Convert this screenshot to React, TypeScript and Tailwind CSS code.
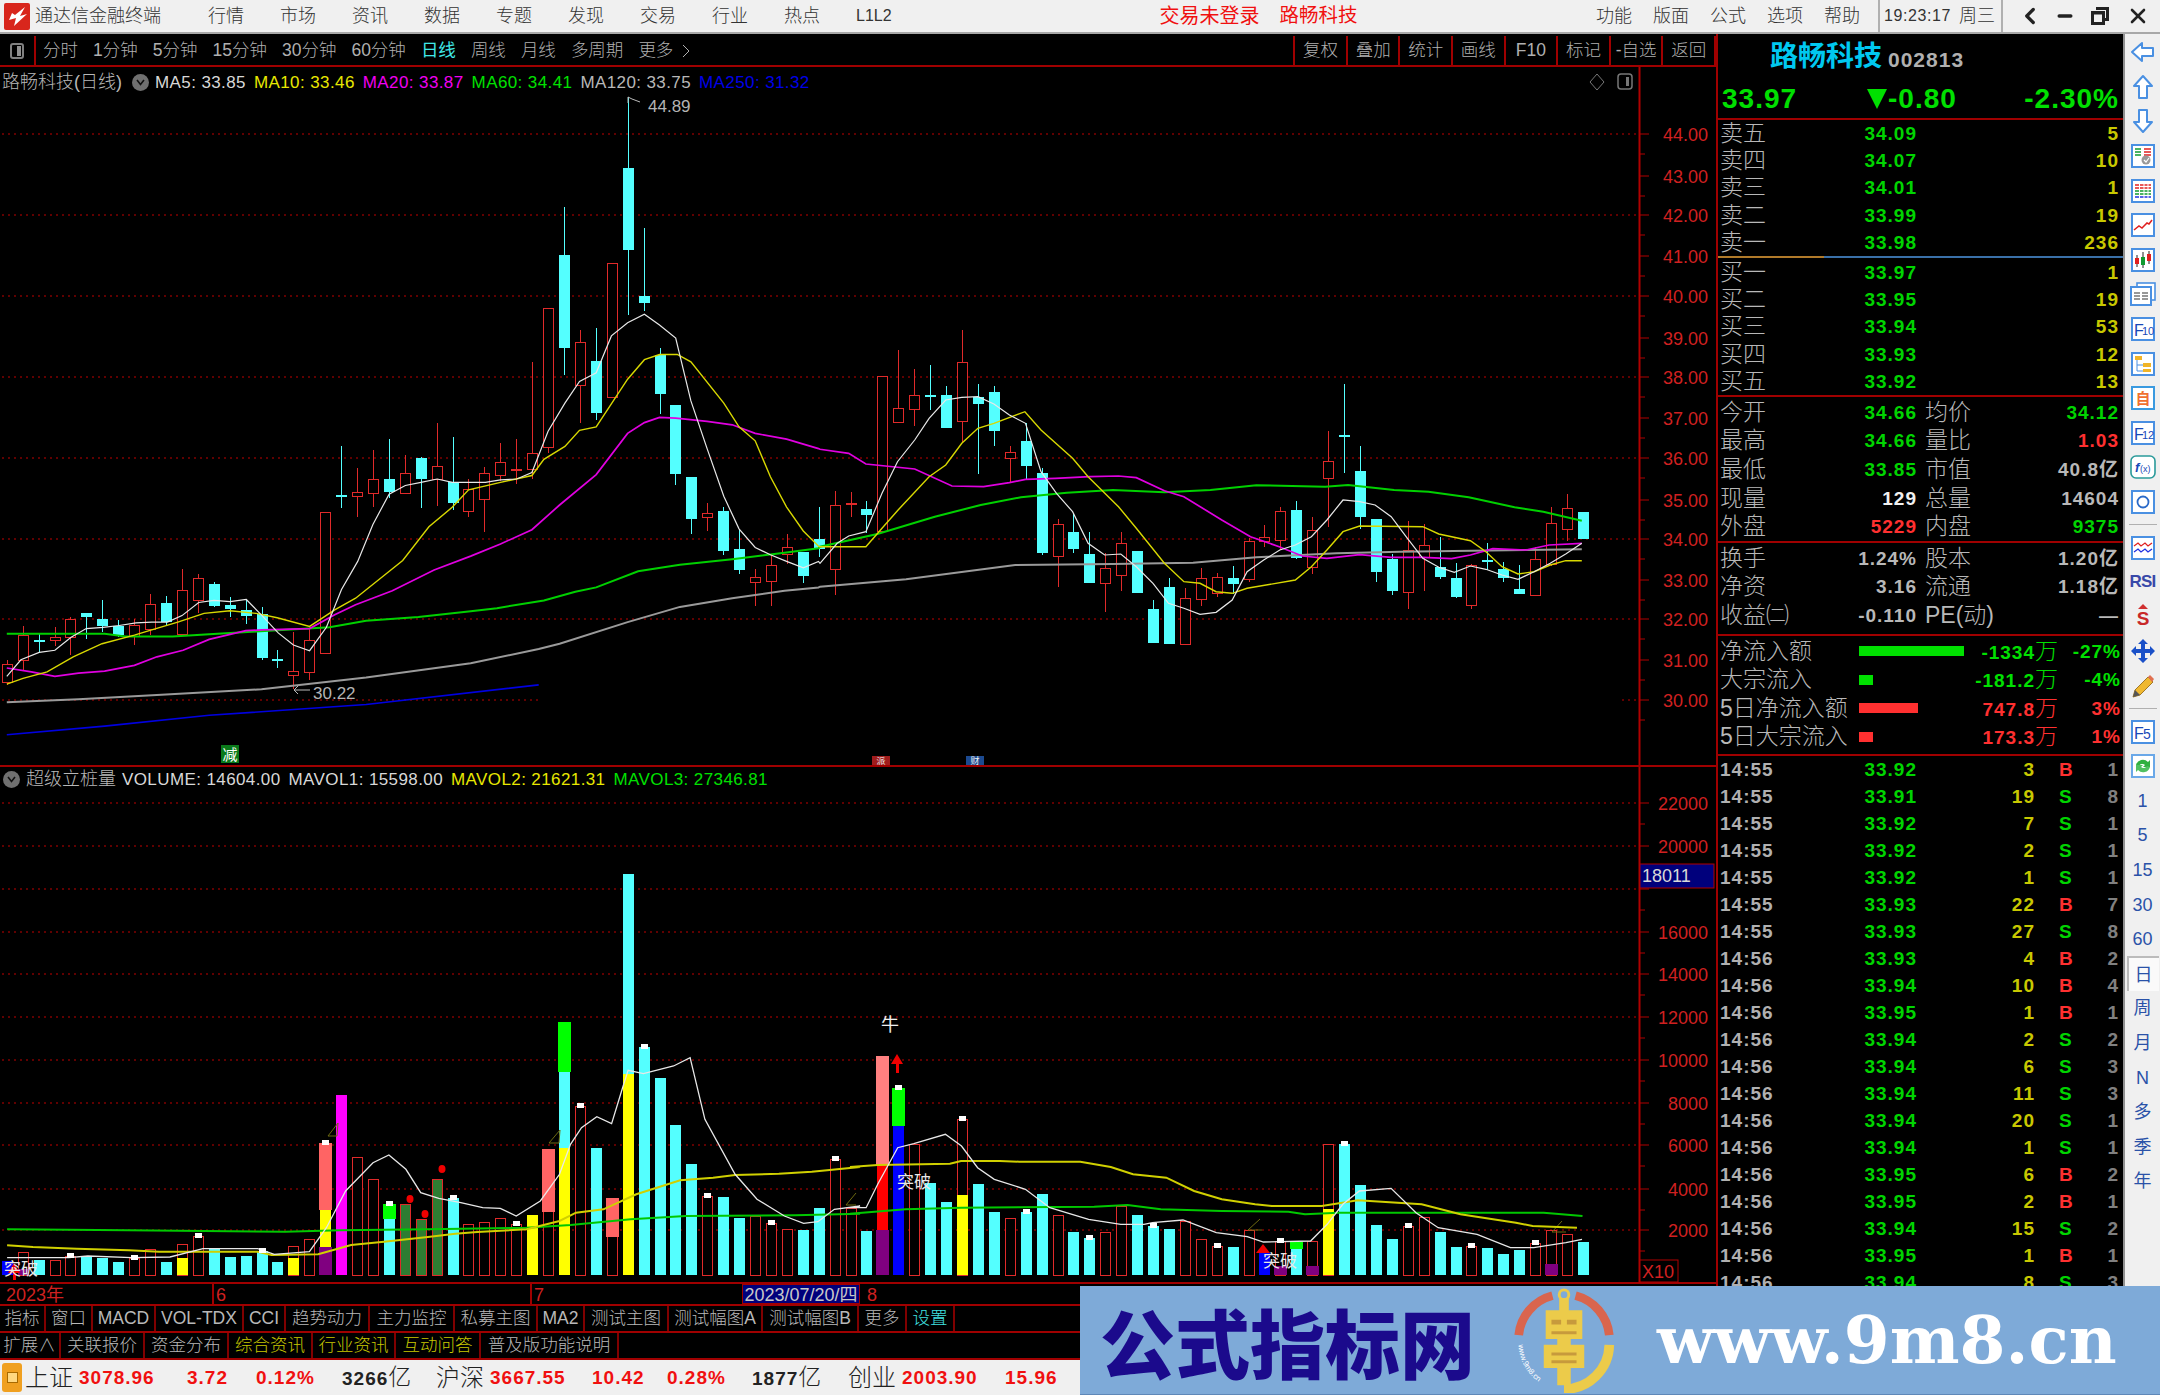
import React from 'react';
import { ChevronLeft, Minus, X } from 'lucide-react';

// chart readings were taken from zoomed crops, so each group keeps its own crop scale
type Pt = [number, number];
const fromA = (p: Pt): Pt => [p[0] / 1.912, 80 + p[1] / 2.306];
const fromB = (p: Pt): Pt => [820 + p[0] / 1.742, 280 + p[1] / 3];
const fromC = (p: Pt): Pt => [p[0] / 1.823, 860 + p[1] / 3];
const fromD = (p: Pt): Pt => [850 + p[0] / 1.802, 860 + p[1] / 3];
const barX = (i: number) => Math.round(6.8 + 15.92 * i);
const pts = (list: Pt[]) => list.map((p) => `${p[0].toFixed(1)},${p[1].toFixed(1)}`).join(' ');

type Candle = [number, number, number, number, 'r' | 'c'];
const candlesA: Candle[] = [
  [1338, 1347, 1389, 1395, 'r'], [1260, 1280, 1337, 1360, 'r'], [1275, 1291, 1293, 1320, 'c'], [1262, 1284, 1292, 1305, 'r'],
  [1238, 1243, 1285, 1325, 'r'], [1228, 1228, 1238, 1288, 'c'], [1200, 1243, 1259, 1272, 'c'], [1245, 1260, 1280, 1285, 'c'],
  [1243, 1256, 1282, 1303, 'r'], [1186, 1208, 1265, 1280, 'r'], [1190, 1207, 1250, 1260, 'c'], [1128, 1177, 1278, 1280, 'r'],
  [1140, 1148, 1199, 1228, 'r'], [1158, 1162, 1213, 1216, 'c'], [1193, 1211, 1221, 1238, 'c'], [1198, 1222, 1235, 1255, 'c'],
  [1215, 1232, 1334, 1338, 'c'], [1315, 1335, 1337, 1355, 'c'], [1272, 1363, 1372, 1405, 'r'], [1265, 1291, 1364, 1383, 'r'],
  [996, 996, 1320, 1323, 'r'], [843, 958, 963, 988, 'c'], [895, 951, 960, 1008, 'r'], [853, 921, 953, 985, 'r'],
  [829, 920, 950, 965, 'c'], [865, 907, 953, 955, 'r'], [870, 871, 919, 988, 'c'], [792, 889, 919, 982, 'r'],
  [823, 928, 977, 992, 'c'], [920, 944, 995, 1008, 'r'], [892, 907, 966, 1043, 'r'], [837, 882, 912, 925, 'r'],
  [829, 896, 898, 932, 'r'], [650, 861, 899, 920, 'r'], [525, 525, 846, 860, 'r'], [293, 404, 618, 680, 'c'],
  [577, 605, 704, 790, 'r'], [573, 647, 767, 785, 'c'], [422, 422, 732, 733, 'r'], [40, 203, 393, 543, 'c'],
  [342, 497, 514, 532, 'c'], [618, 633, 722, 770, 'c'], [750, 750, 909, 933, 'c'], [916, 916, 1012, 1048, 'c'],
  [975, 999, 1008, 1040, 'r'], [985, 995, 1088, 1095, 'c'], [1035, 1082, 1130, 1140, 'c'], [1128, 1146, 1157, 1213, 'r'],
  [1092, 1118, 1154, 1213, 'r'], [1048, 1077, 1092, 1115, 'r'], [1088, 1088, 1143, 1160, 'c'], [985, 1058, 1080, 1100, 'c'],
];
const candlesB: Candle[] = [
  [632, 674, 865, 945, 'r'], [636, 669, 677, 712, 'r'], [663, 686, 704, 760, 'c'], [287, 287, 752, 760, 'r'],
  [209, 385, 428, 430, 'r'], [267, 345, 387, 437, 'r'], [255, 345, 347, 390, 'c'], [317, 344, 442, 443, 'c'],
  [150, 246, 423, 485, 'r'], [313, 350, 370, 582, 'c'], [317, 335, 451, 497, 'c'], [497, 517, 536, 605, 'r'],
  [430, 484, 559, 598, 'c'], [565, 578, 817, 825, 'c'], [718, 733, 829, 920, 'r'], [700, 755, 806, 820, 'c'],
  [755, 822, 910, 910, 'c'], [820, 863, 909, 995, 'r'], [755, 790, 887, 932, 'r'], [812, 812, 937, 940, 'c'],
  [960, 988, 1090, 1090, 'c'], [893, 920, 1090, 1090, 'c'], [925, 953, 1090, 1090, 'r'], [865, 895, 958, 978, 'r'],
  [878, 890, 938, 950, 'r'], [858, 893, 910, 942, 'c'], [775, 782, 895, 905, 'r'], [735, 772, 785, 802, 'r'],
  [682, 692, 778, 810, 'r'], [663, 691, 835, 838, 'c'], [712, 750, 860, 882, 'r'], [452, 543, 595, 740, 'r'],
  [312, 466, 469, 578, 'c'], [497, 574, 713, 748, 'c'], [718, 718, 878, 905, 'c'], [822, 838, 933, 946, 'c'],
  [722, 810, 937, 987, 'r'], [732, 795, 830, 932, 'r'], [770, 862, 892, 897, 'c'], [850, 893, 951, 955, 'c'],
  [853, 855, 976, 987, 'r'], [790, 840, 843, 870, 'c'], [845, 866, 892, 906, 'c'], [855, 926, 942, 943, 'c'],
  [800, 836, 945, 947, 'r'], [682, 728, 850, 858, 'r'], [642, 683, 747, 783, 'r'], [695, 695, 775, 778, 'c'],
];

const maLines: { color: string; width: number; a: Pt[]; b: Pt[] }[] = [
  {
    color: '#9a9a9a', width: 2,
    a: [[13, 1435], [150, 1428], [300, 1418], [500, 1405], [700, 1378], [900, 1345], [1030, 1312], [1070, 1300], [1200, 1250], [1300, 1215], [1400, 1195], [1500, 1178], [1565, 1170]],
    b: [[0, 920], [150, 898], [340, 855], [510, 852], [650, 848], [760, 832], [900, 820], [1010, 815], [1327, 808]],
  },
  {
    color: '#00d000', width: 2,
    a: [[13, 1277], [200, 1277], [240, 1283], [330, 1283], [400, 1278], [490, 1272], [630, 1262], [700, 1247], [800, 1238], [900, 1225], [950, 1218], [1040, 1200], [1100, 1180], [1140, 1170], [1220, 1133], [1300, 1118], [1400, 1105], [1500, 1090], [1565, 1080]],
    b: [[0, 800], [100, 762], [200, 710], [280, 675], [350, 652], [430, 638], [510, 630], [600, 637], [680, 630], [760, 616], [880, 620], [920, 615], [1000, 630], [1060, 635], [1130, 652], [1210, 682], [1260, 695], [1327, 722]],
  },
  {
    color: '#e000e0', width: 1.7,
    a: [[13, 1356], [60, 1365], [105, 1375], [150, 1368], [200, 1363], [257, 1350], [300, 1330], [350, 1315], [400, 1290], [470, 1270], [501, 1268], [592, 1265], [640, 1233], [680, 1210], [750, 1178], [830, 1130], [900, 1098], [957, 1070], [1017, 1037], [1070, 980], [1140, 910], [1200, 815], [1232, 790], [1261, 778], [1292, 780], [1352, 787], [1400, 795], [1444, 815], [1504, 828], [1565, 850]],
    b: [[0, 508], [50, 520], [80, 552], [165, 567], [230, 618], [285, 620], [330, 608], [358, 598], [410, 595], [470, 590], [520, 588], [551, 593], [600, 632], [634, 650], [700, 720], [750, 770], [800, 800], [840, 828], [883, 835], [940, 824], [995, 832], [1050, 832], [1100, 836], [1133, 825], [1172, 806], [1230, 810], [1270, 795], [1327, 790]],
  },
  {
    color: '#d8d800', width: 1.4,
    a: [[13, 1393], [44, 1380], [90, 1365], [140, 1330], [195, 1300], [257, 1280], [290, 1268], [340, 1250], [390, 1230], [440, 1224], [490, 1230], [530, 1240], [592, 1260], [640, 1222], [680, 1195], [770, 1108], [820, 1030], [865, 985], [896, 945], [957, 928], [1017, 912], [1040, 875], [1080, 845], [1108, 808], [1140, 800], [1200, 690], [1232, 645], [1261, 633], [1295, 633], [1321, 650], [1384, 745], [1413, 800], [1444, 832], [1473, 915], [1504, 985], [1536, 1040], [1565, 1075]],
    b: [[0, 800], [80, 800], [108, 745], [136, 690], [190, 590], [219, 555], [247, 490], [275, 445], [303, 430], [357, 395], [385, 450], [440, 535], [467, 590], [520, 680], [551, 745], [600, 850], [634, 905], [662, 910], [690, 935], [718, 940], [744, 925], [828, 900], [856, 860], [883, 810], [911, 755], [940, 738], [1050, 740], [1078, 762], [1133, 782], [1160, 815], [1188, 860], [1216, 882], [1244, 875], [1272, 855], [1299, 842], [1327, 842]],
  },
  {
    color: '#e8e8e8', width: 1.2,
    a: [[13, 1375], [40, 1337], [75, 1320], [105, 1315], [136, 1285], [165, 1265], [197, 1262], [228, 1258], [260, 1252], [290, 1250], [320, 1250], [348, 1235], [380, 1205], [409, 1200], [440, 1203], [471, 1198], [501, 1235], [532, 1275], [561, 1303], [592, 1316], [624, 1262], [653, 1175], [684, 1110], [713, 1025], [744, 955], [775, 935], [805, 928], [836, 920], [865, 928], [896, 928], [928, 928], [957, 922], [988, 920], [1017, 905], [1048, 810], [1080, 745], [1108, 695], [1140, 675], [1169, 590], [1200, 560], [1232, 540], [1261, 565], [1292, 595], [1321, 740], [1352, 850], [1384, 960], [1413, 1035], [1444, 1078], [1473, 1095], [1504, 1110], [1536, 1125], [1565, 1110]],
    b: [[0, 850], [30, 790], [50, 768], [80, 755], [108, 640], [135, 545], [165, 480], [190, 415], [219, 360], [247, 352], [275, 350], [303, 372], [330, 405], [358, 430], [385, 575], [412, 640], [440, 695], [467, 790], [496, 825], [524, 822], [551, 860], [580, 910], [607, 970], [634, 985], [662, 1003], [690, 997], [718, 960], [744, 875], [773, 840], [801, 810], [828, 795], [856, 770], [883, 720], [911, 660], [940, 665], [967, 675], [995, 710], [1021, 770], [1050, 835], [1078, 862], [1105, 877], [1133, 858], [1160, 868], [1188, 885], [1216, 898], [1244, 875], [1272, 850], [1299, 822], [1327, 790]],
  },
];
const ma250: Pt[] = [[13, 1510], [200, 1490], [400, 1465], [700, 1440], [1030, 1395]];

// volume bars, kind + top in crop rows; the rows are 3x and start at y=860
type BarKind = 'c' | 'r' | 'y' | 'm' | 'b' | 'g' | 'R';
const bars: [BarKind, number][] = [
  ['b', 1200], ['r', 1172], ['c', 1198], ['r', 1198], ['r', 1185], ['c', 1187], ['c', 1190], ['c', 1202], ['r', 1192], ['r', 1163],
  ['c', 1202], ['r', 1150], ['r', 1125], ['c', 1160], ['c', 1188], ['c', 1184], ['c', 1170], ['c', 1202], ['r', 1155], ['r', 1135],
  ['y', 1047], ['m', 702], ['r', 887], ['r', 955], ['c', 1075], ['g', 1030], ['g', 1075], ['g', 954], ['c', 1010], ['r', 1090],
  ['r', 1082], ['r', 1072], ['r', 1090], ['y', 1062], ['r', 887], ['y', 860], ['r', 735], ['c', 860], ['r', 1012], ['y', 640],
  ['c', 558], ['c', 652], ['c', 792], ['c', 908], ['r', 1005], ['c', 1008], ['c', 1070], ['r', 1065], ['r', 1087], ['r', 1103],
  ['c', 1107], ['c', 1040], ['r', 895], ['r', 1040], ['c', 1110], ['R', 912], ['b', 795], ['r', 848], ['c', 965], ['c', 1022],
  ['r', 775], ['c', 968], ['c', 1053], ['r', 1072], ['c', 1052], ['c', 1000], ['r', 1063], ['c', 1112], ['c', 1130], ['r', 1112],
  ['r', 1035], ['c', 1062], ['c', 1095], ['c', 1103], ['r', 1080], ['r', 1135], ['r', 1155], ['c', 1157], ['r', 1108], ['b', 1175],
  ['r', 1140], ['c', 1165], ['r', 1140], ['r', 850], ['c', 850], ['c', 972], ['c', 1093], ['c', 1135], ['r', 1095], ['r', 1068],
  ['c', 1112], ['c', 1157], ['r', 1155], ['c', 1162], ['c', 1180], ['c', 1168], ['r', 1145], ['r', 1108], ['r', 1118], ['c', 1143],
];
// i, colour, top, bottom, wide
const segs: [number, string, number, number, boolean][] = [
  [1, '#800080', 1225, 1242, false], [11, '#ffff00', 1192, 1242, false], [18, '#ffff00', 1192, 1242, false],
  [20, '#ff6464', 845, 1047, true], [20, '#800080', 1157, 1242, true], [24, '#00ff00', 1030, 1075, true],
  [34, '#ff6464', 864, 1052, true], [35, '#54ffff', 634, 860, false], [35, '#00ff00', 482, 634, true],
  [38, '#ff6464', 1012, 1128, true], [39, '#54ffff', 40, 640, false], [55, '#ff8080', 585, 912, true],
  [55, '#800080', 1107, 1242, true], [56, '#00ff00', 680, 795, true], [60, '#ffff00', 1003, 1242, false],
  [80, '#800080', 1215, 1242, true], [81, '#00ff00', 1143, 1165, true], [82, '#800080', 1215, 1242, true],
  [83, '#ffff00', 1043, 1242, false], [97, '#800080', 1210, 1242, true],
];
const volLines: { color: string; width: number; a: Pt[]; b: Pt[] }[] = [
  {
    color: '#00c800', width: 2,
    a: [[13, 1105], [232, 1108], [520, 1112], [620, 1108], [780, 1105], [960, 1100], [1040, 1092], [1150, 1075], [1250, 1065], [1450, 1063], [1568, 1058]],
    b: [[0, 1058], [100, 1045], [200, 1040], [440, 1037], [500, 1032], [560, 1045], [670, 1050], [790, 1052], [820, 1060], [880, 1055], [1250, 1055], [1320, 1065]],
  },
  {
    color: '#d0d000', width: 2,
    a: [[13, 1153], [60, 1158], [140, 1163], [235, 1168], [290, 1172], [470, 1172], [495, 1182], [580, 1180], [640, 1152], [700, 1142], [780, 1128], [830, 1118], [870, 1113], [960, 1105], [1020, 1080], [1050, 1055], [1100, 1045], [1160, 1000], [1240, 958], [1300, 950], [1340, 942], [1420, 938], [1480, 932], [1568, 918]],
    b: [[0, 918], [50, 912], [180, 908], [200, 900], [270, 900], [305, 902], [415, 902], [470, 918], [510, 940], [570, 950], [620, 990], [670, 1015], [730, 1030], [760, 1035], [850, 1035], [915, 1018], [1030, 1030], [1100, 1060], [1200, 1085], [1230, 1095], [1310, 1100]],
  },
  {
    color: '#e8e8e8', width: 1.3,
    a: [[13, 1190], [90, 1190], [125, 1190], [160, 1185], [240, 1190], [310, 1188], [370, 1163], [470, 1163], [500, 1180], [564, 1172], [595, 1100], [630, 990], [680, 905], [709, 882], [740, 925], [767, 995], [800, 1012], [840, 1025], [880, 1040], [912, 1042], [941, 1065], [985, 1020], [1020, 940], [1040, 850], [1060, 800], [1088, 767], [1115, 788], [1135, 680], [1145, 628], [1173, 638], [1228, 615], [1258, 590], [1285, 775], [1340, 940], [1380, 1015], [1430, 1065], [1465, 1087], [1491, 1082], [1521, 1045], [1568, 1035]],
    b: [[0, 1040], [29, 1040], [50, 970], [86, 860], [115, 848], [172, 820], [201, 855], [230, 920], [260, 955], [316, 985], [360, 1040], [430, 1075], [488, 1090], [530, 1090], [545, 1085], [600, 1077], [660, 1115], [716, 1127], [745, 1143], [830, 1140], [860, 1090], [888, 1030], [918, 990], [975, 982], [1020, 1055], [1060, 1100], [1130, 1120], [1190, 1160], [1232, 1160], [1290, 1145], [1319, 1135]],
  },
];

const priceTicks: [string, number][] = [['44.00', 134], ['43.00', 176], ['42.00', 215], ['41.00', 256], ['40.00', 296], ['39.00', 338], ['38.00', 377], ['37.00', 418], ['36.00', 458], ['35.00', 500], ['34.00', 539], ['33.00', 580], ['32.00', 619], ['31.00', 660], ['30.00', 700]];
const priceGrid = [134, 215, 296, 377, 458, 539, 619];
const volTicks: [string, number][] = [['22000', 802], ['20000', 845], ['18000', 888], ['16000', 931], ['14000', 973], ['12000', 1016], ['10000', 1059], ['8000', 1102], ['6000', 1144], ['4000', 1188], ['2000', 1229]];

const RED = '#e02a2a';
const CYAN = '#54ffff';
const AXIS_TEXT = '#d02020';

function PriceChart() {
  const all = [...candlesA.map((c) => ({ c, y: (v: number) => 80 + v / 2.306 })), ...candlesB.map((c) => ({ c, y: (v: number) => 280 + v / 3 }))];
  return (
    <svg viewBox="0 67 1716 698" className="block w-[1716px] h-[698px]">
      {priceGrid.map((y) => (
        <line key={y} x1={2} x2={1638} y1={y} y2={y} stroke="#c00000" strokeDasharray="2 4" />
      ))}
      <line x1={2} x2={539} y1={700} y2={700} stroke="#c00000" strokeDasharray="2 4" />
      <line x1={1622} x2={1638} y1={700} y2={700} stroke="#c00000" strokeDasharray="2 4" />
      <g shapeRendering="crispEdges">
        {all.map(({ c, y }, i) => {
          const x = barX(i);
          const color = c[4] === 'r' ? RED : CYAN;
          const flat = y(c[2]) - y(c[1]) < 3;
          return (
            <g key={i}>
              <line x1={x + 0.5} x2={x + 0.5} y1={Math.round(y(c[0]))} y2={Math.round(y(c[3]))} stroke={color} />
              {flat ? (
                <rect x={x - 5} y={Math.round(y(c[1]))} width={11} height={2} fill={color} />
              ) : c[4] === 'r' ? (
                <rect x={x - 4.5} y={Math.round(y(c[1])) + 0.5} width={10} height={Math.round(y(c[2]) - y(c[1]))} fill="#000" stroke={color} />
              ) : (
                <rect x={x - 5} y={Math.round(y(c[1]))} width={11} height={Math.round(y(c[2]) - y(c[1]))} fill={color} />
              )}
            </g>
          );
        })}
      </g>
      <polyline points={pts(ma250.map(fromA))} fill="none" stroke="#0000e0" strokeWidth={1.6} />
      {maLines.map((l) => (
        <polyline key={l.color} points={pts([...l.a.map(fromA), ...l.b.map(fromB)])} fill="none" stroke={l.color} strokeWidth={l.width} />
      ))}
      <path d="M628 97 L632 99 L640 102 M628 97 L628 103" stroke="#bbb" fill="none" />
      <text x={648} y={112} fill="#b4b4b4" fontSize={17}>44.89</text>
      <path d="M294 690 L310 690 M294 690 L298 694 M294 690 L298 686" stroke="#bbb" fill="none" />
      <text x={313} y={699} fill="#b4b4b4" fontSize={17}>30.22</text>
      <rect x={221} y={745} width={18} height={18} fill="#0a7a1a" />
      <text x={230} y={760} fill="#fff" fontSize={15} textAnchor="middle">减</text>
      <rect x={872} y={756} width={18} height={9} fill="#a01c1c" />
      <text x={881} y={764} fill="#eee" fontSize={9} textAnchor="middle">派</text>
      <rect x={966} y={756} width={18} height={9} fill="#1c4a90" />
      <text x={975} y={764} fill="#eee" fontSize={9} textAnchor="middle">财</text>
      <line x1={1639.5} x2={1639.5} y1={67} y2={765} stroke="#b00000" strokeWidth={2} />
      {priceTicks.map(([t, y]) => (
        <g key={t}>
          <line x1={1640} x2={1649} y1={y} y2={y} stroke="#b00000" />
          <line x1={1640} x2={1645} y1={y + 20} y2={y + 20} stroke="#b00000" />
          <text x={1708} y={y + 6.5} fill={AXIS_TEXT} fontSize={18} textAnchor="end">{t}</text>
        </g>
      ))}
      <path d="M1597 74 L1604 82 L1597 90 L1590 82 Z" fill="none" stroke="#777" />
      <rect x={1618} y={74} width={14} height={15} rx={3} fill="none" stroke="#777" strokeWidth={1.5} />
      <rect x={1626} y={77} width={3} height={9} fill="#777" />
    </svg>
  );
}

function VolumeChart() {
  const y = (v: number) => Math.round(860 + v / 3);
  return (
    <svg viewBox="0 766 1716 516" className="block w-[1716px] h-[516px]">
      {volTicks.map(([t, v]) => (
        <line key={t} x1={2} x2={1638} y1={v} y2={v} stroke="#c00000" strokeDasharray="2 4" />
      ))}
      <g shapeRendering="crispEdges">
        {bars.map(([k, top], i) => {
          const x = barX(i);
          const h = y(1242) - y(top);
          if (k === 'r' || k === 'g') {
            return <rect key={i} x={x - 4.5} y={y(top) + 0.5} width={10} height={h} fill={k === 'g' ? '#2e7d32' : '#000'} stroke={RED} />;
          }
          const fill = { c: CYAN, y: '#ffff00', m: '#ff00ff', b: '#0000ff', R: '#ff0000' }[k];
          return <rect key={i} x={x - 5} y={y(top)} width={11} height={h} fill={fill} />;
        })}
        {segs.map(([i, color, top, bottom, wide], n) => (
          <rect key={n} x={barX(i) - (wide ? 6 : 5)} y={y(top)} width={wide ? 13 : 11} height={y(bottom) - y(top)} fill={color} />
        ))}
      </g>
      <path d="M328 1135 L338 1122 L337 1135 Z M549 1142 L560 1129 L559 1142 Z" fill="none" stroke="#6e6a10" />
      <path d="M846 1204 L856 1192 M846 1204 L856 1204 M1248 1229 L1260 1218 M1248 1229 L1262 1229 M1552 1231 L1562 1220 M1552 1231 L1566 1231" fill="none" stroke="#6e6a10" />
      {volLines.map((l) => (
        <polyline key={l.color} points={pts([...l.a.map(fromC), ...l.b.map(fromD)])} fill="none" stroke={l.color} strokeWidth={l.width} />
      ))}
      {bars.map(([, top], i) => {
        if (i < 4 || i % 4 !== 0) return null;
        const over = segs.filter((s) => s[0] === i).map((s) => s[2]);
        const t = Math.min(top, ...over);
        return <rect key={i} x={barX(i) - 3} y={y(t) - 3} width={7} height={5} fill="#fff" shapeRendering="crispEdges" />;
      })}
      <ellipse cx={410} cy={1198} rx={3.5} ry={4} fill="#f00000" />
      <ellipse cx={425} cy={1213} rx={3.5} ry={4} fill="#f00000" />
      <ellipse cx={442} cy={1168} rx={3.5} ry={4} fill="#f00000" />
      <path d="M897 1053 L903 1063 L899 1063 L899 1072 L896 1072 L896 1063 L891 1063 Z" fill="#f00000" />
      <path d="M1263 1243 L1270 1252 L1256 1252 Z" fill="#f00000" />
      <path d="M14 1262 L20 1272 L16 1272 L16 1279 L13 1279 L13 1272 L8 1272 Z" fill="#f00000" />
      <text x={890} y={1030} fill="#eee" fontSize={18} textAnchor="middle">牛</text>
      <text x={897} y={1187} fill="#e8e8e8" fontSize={17}>突破</text>
      <text x={1263} y={1266} fill="#e8e8e8" fontSize={17}>突破</text>
      <text x={4} y={1274} fill="#e8e8e8" fontSize={17}>突破</text>
      <line x1={1639.5} x2={1639.5} y1={766} y2={1282} stroke="#b00000" strokeWidth={2} />
      {volTicks.map(([t, v]) => (
        <g key={t}>
          <line x1={1640} x2={1649} y1={v} y2={v} stroke="#b00000" />
          <line x1={1640} x2={1645} y1={v + 21} y2={v + 21} stroke="#b00000" />
          {t !== '18000' && <text x={1708} y={v + 6.5} fill={AXIS_TEXT} fontSize={18} textAnchor="end">{t}</text>}
        </g>
      ))}
      <rect x={1640} y={863} width={74} height={24} fill="#00007c" stroke="#b00000" />
      <text x={1642} y={881} fill="#d8d8d8" fontSize={18}>18011</text>
      <rect x={1640} y={1259} width={38} height={22} fill="#000" stroke="#b00000" />
      <text x={1642} y={1277} fill={AXIS_TEXT} fontSize={18}>X10</text>
    </svg>
  );
}

function Legend({ items }: { items: [string, string][] }) {
  return (
    <>
      {items.map(([t, c]) => (
        <span key={t} style={{ color: c }}>{t}</span>
      ))}
    </>
  );
}

const Caret = () => (
  <span className="flex h-[17px] w-[17px] items-center justify-center rounded-full bg-[#707070]">
    <svg width="9" height="7" viewBox="0 0 9 7"><path d="M1 1 L4.5 5.5 L8 1" fill="none" stroke="#111" strokeWidth="1.6" /></svg>
  </span>
);

const CN = 'font-light text-[23px] text-[#b8b8b8] leading-none whitespace-nowrap tracking-normal';

function Order({ label, price, vol }: { label: string; price: string; vol: string }) {
  return (
    <div className="flex h-[27.2px] items-center pl-[2px] pr-[4px]">
      <span className={`${CN} w-[70px]`}>{label}</span>
      <span className="w-[127px] text-right text-[#00d400]">{price}</span>
      <span className="flex-1 text-right text-[#c8c800]">{vol}</span>
    </div>
  );
}

function Stat({ a, av, ac, b, bv, bc, h = 'h-[28.7px]' }: { a: string; av: string; ac: string; b: string; bv: string; bc: string; h?: string }) {
  return (
    <div className={`flex ${h} items-center pl-[2px] pr-[4px]`}>
      <span className={`${CN} w-[70px]`}>{a}</span>
      <span className="w-[127px] text-right" style={{ color: ac }}>{av}</span>
      <span className={`${CN} ml-[8px] w-[80px]`}>{b}</span>
      <span className="flex-1 whitespace-nowrap text-right" style={{ color: bc }}>{bv}</span>
    </div>
  );
}

function Flow({ label, bar, color, val, pct }: { label: string; bar: number; color: string; val: string; pct: string }) {
  return (
    <div className="flex h-[28.4px] items-center pl-[2px] pr-[2px]">
      <span className={`${CN} w-[139px]`}>{label}</span>
      <span className="h-[10px] shrink-0" style={{ width: bar, background: color }} />
      <span className="flex-1" />
      <span className="whitespace-nowrap text-right" style={{ color }}>
        {val}<span className="text-[23px] font-light leading-none">万</span>
      </span>
      <span className="w-[62px] text-right" style={{ color }}>{pct}</span>
    </div>
  );
}

const ticks: [string, string, string, string, string][] = [
  ['14:55', '33.92', '3', 'B', '1'], ['14:55', '33.91', '19', 'S', '8'], ['14:55', '33.92', '7', 'S', '1'], ['14:55', '33.92', '2', 'S', '1'],
  ['14:55', '33.92', '1', 'S', '1'], ['14:55', '33.93', '22', 'B', '7'], ['14:55', '33.93', '27', 'S', '8'], ['14:56', '33.93', '4', 'B', '2'],
  ['14:56', '33.94', '10', 'B', '4'], ['14:56', '33.95', '1', 'B', '1'], ['14:56', '33.94', '2', 'S', '2'], ['14:56', '33.94', '6', 'S', '3'],
  ['14:56', '33.94', '11', 'S', '3'], ['14:56', '33.94', '20', 'S', '1'], ['14:56', '33.94', '1', 'S', '1'], ['14:56', '33.95', '6', 'B', '2'],
  ['14:56', '33.95', '2', 'B', '1'], ['14:56', '33.94', '15', 'S', '2'], ['14:56', '33.95', '1', 'B', '1'], ['14:56', '33.94', '8', 'S', '3'],
];

function RightPanel() {
  return (
    <div className="h-full w-[405px] shrink-0 overflow-hidden bg-black text-[19px] font-bold leading-none tracking-[1px]">
      <div className="flex h-[86px] flex-col border-b-2 border-[#a00000]">
        <div className="flex h-[45px] items-center pl-[52px]">
          <span className="text-[28px] font-bold tracking-normal text-[#00c8f0]">路畅科技</span>
          <span className="ml-[6px] mt-[5px] text-[21px] text-[#b0b0b0]">002813</span>
        </div>
        <div className="flex flex-1 items-center pl-[4px] pr-[4px] text-[28px] text-[#00e000]">
          <span className="w-[145px]">33.97</span>
          <svg width="20" height="22" viewBox="0 0 20 22" className="shrink-0"><path d="M0 1 L20 1 L10 21 Z" fill="#00e000" /></svg>
          <span className="ml-[1px]">-0.80</span>
          <span className="ml-auto">-2.30%</span>
        </div>
      </div>
      <Order label="卖五" price="34.09" vol="5" />
      <Order label="卖四" price="34.07" vol="10" />
      <Order label="卖三" price="34.01" vol="1" />
      <Order label="卖二" price="33.99" vol="19" />
      <Order label="卖一" price="33.98" vol="236" />
      <div className="mb-[1px] flex h-[2px]">
        <span className="w-[106px] bg-[#b07a2a]" />
        <span className="flex-1 bg-[#3a70a8]" />
      </div>
      <Order label="买一" price="33.97" vol="1" />
      <Order label="买二" price="33.95" vol="19" />
      <Order label="买三" price="33.94" vol="53" />
      <Order label="买四" price="33.93" vol="12" />
      <Order label="买五" price="33.92" vol="13" />
      <div className="mb-[1px] h-[2px] bg-[#a00000]" />
      <Stat a="今开" av="34.66" ac="#00d400" b="均价" bv="34.12" bc="#00d400" />
      <Stat a="最高" av="34.66" ac="#00d400" b="量比" bv="1.03" bc="#ff3030" />
      <Stat a="最低" av="33.85" ac="#00d400" b="市值" bv="40.8亿" bc="#b8b8b8" />
      <Stat a="现量" av="129" ac="#f0f0f0" b="总量" bv="14604" bc="#b8b8b8" />
      <Stat a="外盘" av="5229" ac="#ff3030" b="内盘" bv="9375" bc="#00d400" />
      <div className="mb-[1px] h-[2px] bg-[#a00000]" />
      <Stat a="换手" av="1.24%" ac="#b8b8b8" b="股本" bv="1.20亿" bc="#b8b8b8" h="h-[28.3px]" />
      <Stat a="净资" av="3.16" ac="#b8b8b8" b="流通" bv="1.18亿" bc="#b8b8b8" h="h-[28.3px]" />
      <Stat a="收益㈡" av="-0.110" ac="#b8b8b8" b="PE(动)" bv="—  " bc="#b8b8b8" h="h-[28.3px]" />
      <div className="mt-[5px] mb-[1px] h-[2px] bg-[#a00000]" />
      <Flow label="净流入额" bar={105} color="#00e000" val="-1334" pct="-27%" />
      <Flow label="大宗流入" bar={14} color="#00e000" val="-181.2" pct="-4%" />
      <Flow label="5日净流入额" bar={59} color="#ff3030" val="747.8" pct="3%" />
      <Flow label="5日大宗流入" bar={14} color="#ff3030" val="173.3" pct="1%" />
      <div className="mt-[3px] h-[2px] bg-[#a00000]" />
      {ticks.map((t, i) => (
        <div key={i} className="flex h-[27px] items-center pl-[2px] pr-[4px]">
          <span className="w-[70px] text-[#b0b0b0]">{t[0]}</span>
          <span className="w-[127px] text-right text-[#00d400]">{t[1]}</span>
          <span className="w-[118px] text-right text-[#c8c800]">{t[2]}</span>
          <span className={`ml-[24px] ${t[3] === 'B' ? 'text-[#ff3030]' : 'text-[#00d400]'}`}>{t[3]}</span>
          <span className="flex-1 text-right text-[#808080]">{t[4]}</span>
        </div>
      ))}
    </div>
  );
}

// little icon tile on the side rail
const Tile = ({ children, ring = '#4a90e2' }: { children: React.ReactNode; ring?: string }) => (
  <svg width="24" height="24" viewBox="0 0 24 24">
    <rect x="1" y="1" width="22" height="22" fill="#fff" stroke={ring} strokeWidth="2" />
    {children}
  </svg>
);
const Arrow = ({ d }: { d: string }) => (
  <svg width="26" height="26" viewBox="0 0 26 26"><path d={d} fill="#fff" stroke="#4a90e2" strokeWidth="2" strokeLinejoin="round" /></svg>
);

const railItems: React.ReactNode[] = [
  <Arrow d="M2 13 L12 4 L12 9 L23 9 L23 17 L12 17 L12 22 Z" />,
  <Arrow d="M13 2 L22 12 L17 12 L17 24 L9 24 L9 12 L4 12 Z" />,
  <Arrow d="M13 24 L22 14 L17 14 L17 2 L9 2 L9 14 L4 14 Z" />,
  <Tile><path d="M4 5h6M4 8h6M4 11h6" stroke="#109a30" strokeWidth="1.6" /><path d="M13 5h7M13 8h7M13 11h7" stroke="#e02020" strokeWidth="1.6" /><circle cx="15" cy="16" r="4.5" fill="#999" /><path d="M13 16l2 2 3-4" stroke="#fff" fill="none" strokeWidth="1.2" /></Tile>,
  <Tile><path d="M4 6h16" stroke="#e02020" strokeWidth="1.5" /><path d="M4 9h16" stroke="#e02020" strokeWidth="1.5" /><path d="M4 12h16" stroke="#109a30" strokeWidth="1.5" /><path d="M4 15h16" stroke="#109a30" strokeWidth="1.5" /><path d="M4 18h16" stroke="#2030e0" strokeWidth="1.5" /><path d="M8.5 5v14M13 5v14M17 5v14" stroke="#fff" strokeWidth="1" /></Tile>,
  <Tile><path d="M3 17 L8 13 L11 15 L16 10 L18 11 L21 7" stroke="#e02020" fill="none" strokeWidth="1.5" /></Tile>,
  <Tile><path d="M6 7v12M12 4v16M18 3v13" stroke="#222" /><rect x="4" y="10" width="4" height="6" fill="#e02020" /><rect x="10" y="9" width="4" height="8" fill="#109a30" /><rect x="16" y="6" width="4" height="7" fill="#e02020" /></Tile>,
  <svg width="26" height="24" viewBox="0 0 26 24"><rect x="7" y="1" width="18" height="17" fill="#fff" stroke="#4a90e2" strokeWidth="1.6" /><rect x="1" y="5" width="20" height="18" fill="#fff" stroke="#4a90e2" strokeWidth="2" /><path d="M4 11h6M12 11h6M4 14h6M12 14h6M4 17h6M12 17h6" stroke="#777" strokeWidth="1.3" /></svg>,
  <Tile><text x="3" y="19" fontSize="16" fill="#1848b8">F</text><text x="11" y="18" fontSize="11" fill="#1848b8">10</text></Tile>,
  <Tile><rect x="4" y="4" width="7" height="4" fill="#f0b428" /><rect x="12" y="11" width="8" height="4" fill="#f0b428" /><rect x="12" y="17" width="8" height="3" fill="#f0b428" /><path d="M6 8v11h6M6 13h6" stroke="#4a90e2" fill="none" /></Tile>,
  <Tile ring="#3a9ae0"><text x="12" y="18" fontSize="15" fontWeight="700" fill="#f07030" textAnchor="middle">自</text></Tile>,
  <Tile><text x="3" y="19" fontSize="16" fill="#1848b8">F</text><text x="11" y="18" fontSize="11" fill="#1848b8">12</text></Tile>,
  <svg width="26" height="24" viewBox="0 0 26 24"><rect x="1" y="1" width="24" height="22" rx="5" fill="#fff" stroke="#2a9a9a" strokeWidth="1.6" /><text x="5" y="17" fontSize="13" fontStyle="italic" fontWeight="700" fill="#1848b8">f</text><text x="10" y="17" fontSize="9" fill="#1848b8">(x)</text></svg>,
  <Tile><circle cx="12" cy="12" r="5.5" fill="none" stroke="#2a6ac8" strokeWidth="1.8" /></Tile>,
  <span className="h-[1px] w-[28px] self-center bg-[#b0b0b0]" />,
  <Tile><path d="M3 10 L7 7 L10 10 L14 7 L17 10 L21 7" stroke="#e02020" fill="none" strokeWidth="1.3" /><path d="M3 16 L7 13 L10 16 L14 13 L17 16 L21 13" stroke="#2030e0" fill="none" strokeWidth="1.3" /></Tile>,
  <span className="text-[17px] font-bold tracking-tighter text-[#3848a8]">RSI</span>,
  <svg width="26" height="28" viewBox="0 0 26 28"><path d="M13 1l5 5h-10z" fill="#d03030" /><text x="13" y="22" fontSize="19" fontWeight="700" fill="#c82828" textAnchor="middle">S</text></svg>,
  <svg width="26" height="26" viewBox="0 0 26 26"><path d="M13 1l5 5h-3v5h5V8l5 5-5 5v-3h-5v5h3l-5 5-5-5h3v-5H6v3l-5-5 5-5v3h5V6H8z" fill="#1a50c8" /></svg>,
  <svg width="26" height="26" viewBox="0 0 26 26"><path d="M3 24l2-7L18 4l5 5L10 22z" fill="#f0b830" stroke="#a07828" /><path d="M18 4l2-2 4 4-2 3z" fill="#e07050" /><path d="M3 24l2-7 5 5z" fill="#555" /></svg>,
  <span className="h-[1px] w-[28px] self-center bg-[#b0b0b0]" />,
  <Tile><text x="3" y="19" fontSize="16" fill="#1848b8">F</text><text x="12" y="19" fontSize="14" fill="#1848b8">5</text></Tile>,
  <Tile ring="#6aa8e8"><path d="M5 11a7 7 0 0 1 12-3l2-2v7h-7l2-2a4 4 0 0 0-6 1z" fill="#30b040" /><path d="M19 13a7 7 0 0 1-12 3l-2 2v-7h7l-2 2a4 4 0 0 0 6-1z" fill="#50c060" /></Tile>,
];
const railPeriods = ['1', '5', '15', '30', '60', '日', '周', '月', 'N', '多', '季', '年'];

function SideRail() {
  return (
    <div className="flex h-full w-[37px] shrink-0 flex-col items-center border-l-2 border-[#909090] bg-[#f0f0f0] pt-[1px] text-[#2a52a8]">
      {railItems.map((item, i) => (
        <div key={i} className={`flex items-center justify-center ${i === 14 || i === 20 ? 'h-[11px]' : 'h-[34.6px]'}`}>{item}</div>
      ))}
      {railPeriods.map((p) => (
        <div
          key={p}
          className={`flex h-[34.6px] w-[32px] items-center justify-center text-[18px] leading-none ${p === '日' ? 'border-l-2 border-t-2 border-[#bbbbbb] bg-[#fafafa]' : ''}`}
        >
          {p}
        </div>
      ))}
    </div>
  );
}

const menuLeft = ['行情', '市场', '资讯', '数据', '专题', '发现', '交易', '行业', '热点'];
const menuRight = ['功能', '版面', '公式', '选项', '帮助'];
const periods = ['分时', '1分钟', '5分钟', '15分钟', '30分钟', '60分钟', '日线', '周线', '月线', '多周期', '更多'];
const tools = ['复权', '叠加', '统计', '画线', 'F10', '标记', '-自选', '返回'];
const tabsA: [string, string, string?][] = [
  ['指标', 'w-[46px]'], ['窗口', 'w-[47px]'], ['MACD', 'w-[63px]'], ['VOL-TDX', 'w-[88px]'], ['CCI', 'w-[42px]'], ['趋势动力', 'w-[84px]'], ['主力监控', 'w-[85px]'],
  ['私募主图', 'w-[83px]'], ['MA2', 'w-[47px]'], ['测试主图', 'w-[84px]'], ['测试幅图A', 'w-[94px]'], ['测试幅图B', 'w-[96px]'], ['更多', 'w-[48px]'], ['设置', 'w-[48px]', 'text-[#40e0e0]'],
];
const tabsB: [string, string, string?][] = [
  ['扩展∧', 'w-[61px]'], ['关联报价', 'w-[84px]'], ['资金分布', 'w-[84px]'], ['综合资讯', 'w-[84px]', 'text-[#c8c800]'], ['行业资讯', 'w-[83px]', 'text-[#c8c800]'], ['互动问答', 'w-[85px]', 'text-[#c8c800]'], ['普及版功能说明', 'w-[138px]'],
];

function TabRow({ tabs }: { tabs: [string, string, string?][] }) {
  return (
    <div className="flex h-[27px] shrink-0 border-b-2 border-[#a00000] bg-black">
      {tabs.map(([t, w, c]) => (
        <span key={t} className={`flex items-center justify-center whitespace-nowrap border-r-2 border-[#800000] text-[17.5px] font-light leading-none ${w} ${c ?? 'text-[#b8b8b8]'}`}>{t}</span>
      ))}
    </div>
  );
}

function Watermark() {
  return (
    <div className="absolute left-[1080px] top-[1286px] flex h-[109px] w-[1080px] items-center border-b border-[#5f88b8] bg-[#7eaad8]">
      <span className="ml-[20px] whitespace-nowrap font-['Noto_Sans_CJK_SC',sans-serif] text-[75px] font-black leading-none text-[#1b0a8c]">公式指标网</span>
      <svg viewBox="0 0 110 110" className="ml-[36px] h-[106px] w-[106px] shrink-0">
        <path d="M8 50 A47 47 0 0 1 43 9" fill="none" stroke="#d9654e" strokeWidth="9" />
        <path d="M67 9 A47 47 0 0 1 102 50" fill="none" stroke="#d9654e" strokeWidth="9" />
        <path d="M102 60 A47 47 0 0 1 55 106" fill="none" stroke="#eccb4a" strokeWidth="10" />
        <circle cx="55" cy="8" r="5" fill="none" stroke="#eccb4a" strokeWidth="3" />
        <path d="M50 12h10v12h14v30H62v6h14v24H62v18H48V84H34V60h14v-6H36V24h14z" fill="#eccb4a" />
        <path d="M42 34h10v5H42zM58 34h10v5H58zM42 46h26v3H42zM42 68h26v3H42zM42 76h26v3H42z" fill="#c79a3c" />
        <path id="wm-arc" d="M8 60 A47 47 0 0 0 50 106" fill="none" />
        <text fontSize="8" fill="#fff"><textPath href="#wm-arc">www.9m8.cn</textPath></text>
      </svg>
      <span className="ml-[40px] whitespace-nowrap font-['DejaVu_Serif',serif] text-[66px] font-bold leading-none text-white">www.9m8.cn</span>
    </div>
  );
}

export default function App() {
  return (
    <div className="relative flex h-[1395px] w-[2160px] flex-col overflow-hidden bg-black font-['Liberation_Sans','Noto_Sans_CJK_SC',sans-serif]">
      {/* title bar */}
      <div className="flex h-[34px] shrink-0 items-center border-b-2 border-[#a8a8a8] bg-[#f0f0f0] text-[18px] leading-none text-[#333]">
        <svg width="26" height="27" viewBox="0 0 26 27" className="ml-[4px] shrink-0">
          <rect width="26" height="27" rx="2" fill="#d8261c" />
          <path d="M21 4 L16 13 L23 11 L10 23 L12 15 L5 17 L8 10 L11 12 Z" fill="#fff" />
        </svg>
        <span className="ml-[5px] w-[127px] whitespace-nowrap text-[18px] font-light">通达信金融终端</span>
        <div className="ml-[46px] flex items-center gap-[36px]">
          {menuLeft.map((m) => <span key={m} className="font-light">{m}</span>)}
          <span className="text-[16px] font-light">L1L2</span>
        </div>
        <span className="ml-[268px] whitespace-nowrap text-[20px] text-[#f01010]">交易未登录</span>
        <span className="ml-[20px] whitespace-nowrap text-[19.5px] text-[#f01010]">路畅科技</span>
        <div className="ml-auto flex gap-[21px] font-light">
          {menuRight.map((m) => <span key={m}>{m}</span>)}
        </div>
        <div className="ml-[18px] flex h-full w-[125px] items-center whitespace-nowrap border-x-2 border-[#b0b0b0] pl-[4px] text-[16px]">
          <span className="tracking-[0.6px]">19:23:17</span>
          <span className="ml-[8px] text-[18px] font-light">周三</span>
        </div>
        <div className="flex h-full w-[157px] items-center text-[#222]">
          <ChevronLeft size={26} strokeWidth={3} className="ml-[14px]" />
          <Minus size={20} strokeWidth={4} className="ml-[12px]" />
          <svg width="18" height="18" viewBox="0 0 18 18" className="ml-[16px]"><path d="M5 1.5h11.5v11H13M1.5 5.5h11v11h-11zM1.5 6h11" fill="none" stroke="#222" strokeWidth="3" /></svg>
          <X size={24} strokeWidth={2.6} className="ml-[17px]" />
        </div>
      </div>

      <div className="flex h-[1326px] shrink-0">
        {/* charts column */}
        <div className="flex w-[1716px] shrink-0 flex-col">
          <div className="flex h-[33px] shrink-0 items-center border-b-2 border-[#a00000] pt-[2px] text-[17.5px] leading-none text-[#b0b0b0]">
            <span className="flex h-full w-[36px] items-center justify-center border-r-2 border-[#a00000]">
              <span className="flex h-[16px] w-[14px] items-center justify-end rounded-[3px] border-2 border-[#808080] pr-[1px]"><span className="h-[10px] w-[4px] bg-[#909090]" /></span>
            </span>
            <div className="ml-[7px] flex items-center gap-[15px] whitespace-nowrap">
              {periods.map((p) => <span key={p} className={p === '日线' ? 'text-[#40e8e8]' : 'font-light'}>{p}</span>)}
              <svg width="8" height="14" viewBox="0 0 8 14" className="-ml-[6px]"><path d="M1 1 L7 7 L1 13" fill="none" stroke="#b0b0b0" /></svg>
            </div>
            <div className="ml-auto flex h-full">
              {tools.map((t) => (
                <span key={t} className="flex h-full w-[52.6px] items-center justify-center whitespace-nowrap border-l-2 border-[#a00000] font-light">{t}</span>
              ))}
              <span className="w-[2px] bg-[#a00000]" />
            </div>
          </div>

          <div className="relative h-[698px] shrink-0">
            <PriceChart />
            <div className="absolute left-[2px] top-[6px] flex items-center gap-[10px] whitespace-nowrap text-[17px] leading-none tracking-[0.4px]">
              <span className="text-[18px] font-light tracking-normal text-[#b8b8b8]">路畅科技(日线)</span>
              <Caret />
              <div className="-ml-[4px] flex gap-[8px]">
                <Legend items={[['MA5: 33.85', '#d8d8d8'], ['MA10: 33.46', '#e8e800'], ['MA20: 33.87', '#f000f0'], ['MA60: 34.41', '#00e000'], ['MA120: 33.75', '#b8b8b8'], ['MA250: 31.32', '#0000e8']]} />
              </div>
            </div>
          </div>

          <div className="relative h-[517px] shrink-0 border-t-2 border-[#a00000]">
            <VolumeChart />
            <div className="absolute left-[3px] top-[3px] flex items-center gap-[6px] whitespace-nowrap text-[17px] leading-none tracking-[0.4px]">
              <Caret />
              <span className="text-[18px] font-light tracking-normal text-[#b8b8b8]">超级立桩量</span>
              <div className="flex gap-[8px]">
                <Legend items={[['VOLUME: 14604.00', '#d8d8d8'], ['MAVOL1: 15598.00', '#d8d8d8'], ['MAVOL2: 21621.31', '#e8e800'], ['MAVOL3: 27346.81', '#00e000']]} />
              </div>
            </div>
          </div>

          <div className="flex h-[24px] shrink-0 items-center border-y-2 border-[#a00000] text-[18px] leading-none text-[#d02020]">
            <span className="w-[212px] pl-[6px] pt-[1px]">2023年</span>
            <span className="flex h-full w-[318px] items-center border-l-2 border-[#a00000] pl-[2px] pt-[1px]">6</span>
            <span className="flex h-full w-[212px] items-center border-l-2 border-[#a00000] pl-[2px] pt-[1px]">7</span>
            <span className="flex h-full w-[118px] items-center justify-center whitespace-nowrap border border-[#a00000] bg-[#00007c] pt-[1px] text-[#c8c8c8]">2023/07/20/四</span>
            <span className="flex h-full items-center pl-[7px] pt-[1px]">8</span>
          </div>
          <TabRow tabs={tabsA} />
          <TabRow tabs={tabsB} />
        </div>

        {/* quote panel */}
        <div className="flex w-[407px] shrink-0 border-l-2 border-[#a00000]">
          <RightPanel />
        </div>
        <SideRail />
      </div>

      {/* index strip */}
      <div className="flex h-[35px] shrink-0 items-center bg-[#f0f0f0] text-[19px] font-bold leading-none tracking-[1px] text-[#f01010]">
        <span className="ml-[2px] flex h-[29px] w-[20px] items-center justify-center rounded-[3px] bg-[#f0a020]"><span className="h-[11px] w-[11px] border border-[#a86a00] bg-[#ffd880]" /></span>
        <span className="ml-[3px] w-[54px] text-[24px] font-light tracking-normal text-[#222]">上证</span>
        <span className="w-[82px]">3078.96</span>
        <span className="ml-[26px] w-[69px]">3.72</span>
        <span className="w-[86px]">0.12%</span>
        <span className="w-[94px] text-[#222]">3266<span className="text-[23px] font-light">亿</span></span>
        <span className="w-[54px] text-[24px] font-light tracking-normal text-[#222]">沪深</span>
        <span className="w-[102px]">3667.55</span>
        <span className="w-[75px]">10.42</span>
        <span className="w-[85px]">0.28%</span>
        <span className="w-[96px] text-[#222]">1877<span className="text-[23px] font-light">亿</span></span>
        <span className="w-[54px] text-[24px] font-light tracking-normal text-[#222]">创业</span>
        <span className="w-[103px]">2003.90</span>
        <span>15.96</span>
      </div>

      <Watermark />
    </div>
  );
}
